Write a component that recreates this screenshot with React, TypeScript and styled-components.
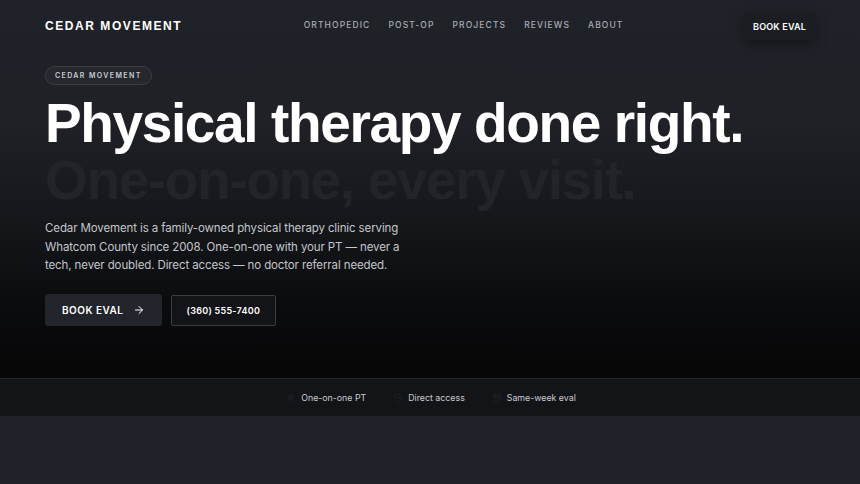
import React from 'react';
import styled, { createGlobalStyle } from 'styled-components';
import { ArrowRight, UserRound, ShieldCheck, CalendarCheck } from 'lucide-react';

const GlobalStyle = createGlobalStyle`
  html, body {
    margin: 0;
    padding: 0;
    background: #202229;
  }
  * {
    box-sizing: border-box;
  }
`;

const colors = {
  page: '#202229',
  text: '#f4f5f7',
  muted: '#a9acb3',
  body: '#c4c6cb',
  line: '#3a3d44',
};

const Page = styled.div`
  width: 860px;
  min-height: 484px;
  background: ${colors.page};
  font-family: 'Inter', 'Liberation Sans', sans-serif;
  color: ${colors.text};
`;

const Hero = styled.section`
  height: 378px;
  background: linear-gradient(
    180deg,
    #202229 0%,
    #1f2127 32%,
    #15171b 58%,
    #0b0c0e 80%,
    #060607 100%
  );
`;

const Header = styled.header`
  height: 50px;
  padding: 0 44px 0 45px;
  display: flex;
  align-items: center;
  justify-content: space-between;
`;

const Logo = styled.div`
  font-family: 'Liberation Sans', Arial, sans-serif;
  font-weight: 700;
  font-size: 12px;
  letter-spacing: 0.13em;
  color: #ffffff;
  margin-top: 1px;
`;

const Nav = styled.nav`
  display: flex;
  gap: 18px;
  margin-left: 2px;
`;

const NavLink = styled.a`
  font-size: 8.5px;
  font-weight: 500;
  letter-spacing: 0.13em;
  color: ${colors.muted};
  text-decoration: none;
  text-transform: uppercase;
`;

const HeaderButton = styled.a`
  display: inline-flex;
  align-items: center;
  height: 27px;
  padding: 0 10px;
  margin-top: 2px;
  background: #1b1d22;
  border-radius: 3px;
  box-shadow: 0 4px 12px rgba(0, 0, 0, 0.35);
  font-size: 9px;
  font-weight: 600;
  letter-spacing: 0.02em;
  color: #ffffff;
  text-decoration: none;
`;

const HeroBody = styled.div`
  padding: 16px 45px 0;
  display: flex;
  flex-direction: column;
  align-items: flex-start;
`;

const Pill = styled.span`
  display: inline-flex;
  align-items: center;
  height: 19px;
  padding: 0 9px;
  border: 1px solid ${colors.line};
  border-radius: 999px;
  background: #26282e;
  font-size: 7px;
  font-weight: 600;
  letter-spacing: 0.2em;
  color: #c9cbd0;
`;

const Headline = styled.h1`
  margin: 10px 0 0;
  font-family: 'Liberation Sans', Arial, sans-serif;
  font-weight: 700;
  font-size: 55px;
  line-height: 57px;
  letter-spacing: -0.025em;
`;

// the second line is meant to nearly vanish into the background
const HeadLine = styled.span<{ $faint?: boolean }>`
  display: block;
  color: ${(p) => (p.$faint ? '#222429' : '#ffffff')};
`;

const Lead = styled.p`
  margin: 10px 0 0;
  max-width: 366px;
  font-size: 11.5px;
  line-height: 18.5px;
  letter-spacing: -0.01em;
  color: ${colors.body};
`;

const Actions = styled.div`
  display: flex;
  gap: 9px;
  margin-top: 19px;
`;

const PrimaryButton = styled.a`
  display: inline-flex;
  align-items: center;
  gap: 9px;
  height: 32px;
  padding: 0 17px;
  background: #22252b;
  border-radius: 3px;
  font-size: 10px;
  font-weight: 600;
  letter-spacing: 0.05em;
  color: #ffffff;
  text-decoration: none;
`;

const GhostButton = styled.a`
  display: inline-flex;
  align-items: center;
  height: 31px;
  margin-top: 1px;
  padding: 0 15px;
  background: #131417;
  border: 1px solid ${colors.line};
  border-radius: 2px;
  font-size: 9px;
  font-weight: 600;
  letter-spacing: 0.03em;
  color: #ffffff;
  text-decoration: none;
`;

const TrustBar = styled.div`
  height: 38px;
  background: #131417;
  border-top: 1px solid #26282d;
  display: flex;
  align-items: center;
  justify-content: center;
  gap: 27px;
  padding-left: 2px;
`;

const TrustItem = styled.span`
  display: inline-flex;
  align-items: center;
  gap: 5px;
  font-size: 8.8px;
  color: #c9cbd0;
`;

const TrustIcon = styled.span`
  display: inline-flex;
  color: #222428;
`;

const trust = [
  { label: 'One-on-one PT', icon: UserRound },
  { label: 'Direct access', icon: ShieldCheck },
  { label: 'Same-week eval', icon: CalendarCheck },
];

const links = ['Orthopedic', 'Post-op', 'Projects', 'Reviews', 'About'];

export default function App() {
  return (
    <Page>
      <GlobalStyle />
      <Hero>
        <Header>
          <Logo>CEDAR MOVEMENT</Logo>
          <Nav>
            {links.map((l) => (
              <NavLink key={l} href="#">
                {l}
              </NavLink>
            ))}
          </Nav>
          <HeaderButton href="#">BOOK EVAL</HeaderButton>
        </Header>
        <HeroBody>
          <Pill>CEDAR MOVEMENT</Pill>
          <Headline>
            <HeadLine>Physical therapy done right.</HeadLine>
            <HeadLine $faint>One-on-one, every visit.</HeadLine>
          </Headline>
          <Lead>
            Cedar Movement is a family-owned physical therapy clinic serving Whatcom County since
            2008. One-on-one with your PT — never a tech, never doubled. Direct access — no doctor
            referral needed.
          </Lead>
          <Actions>
            <PrimaryButton href="#">
              BOOK EVAL
              <ArrowRight size={12} strokeWidth={2} />
            </PrimaryButton>
            <GhostButton href="#">(360) 555-7400</GhostButton>
          </Actions>
        </HeroBody>
      </Hero>
      <TrustBar>
        {trust.map(({ label, icon: Icon }) => (
          <TrustItem key={label}>
            <TrustIcon>
              <Icon size={10} strokeWidth={2} />
            </TrustIcon>
            {label}
          </TrustItem>
        ))}
      </TrustBar>
    </Page>
  );
}
